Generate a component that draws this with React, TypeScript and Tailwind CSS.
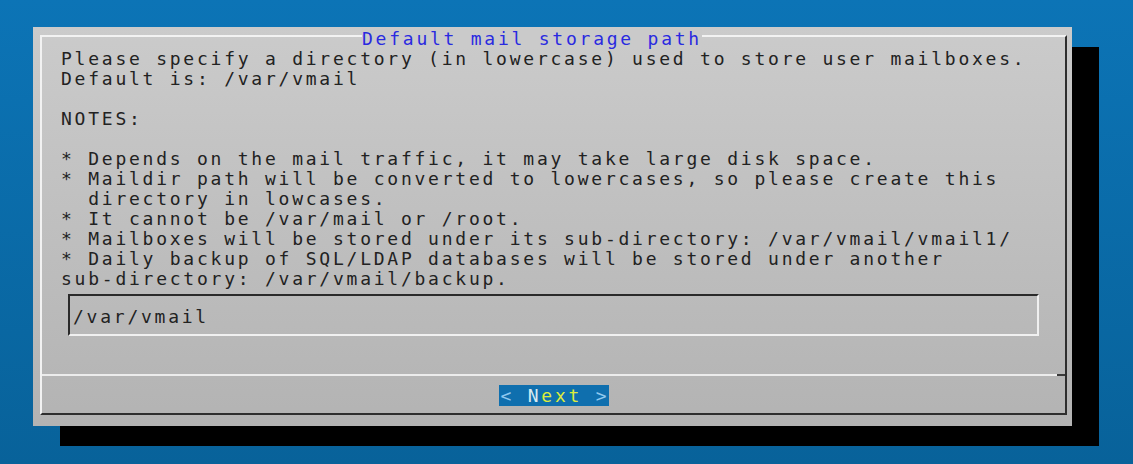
const lines = [
  "Please specify a directory (in lowercase) used to store user mailboxes.",
  "Default is: /var/vmail",
  "",
  "NOTES:",
  "",
  "* Depends on the mail traffic, it may take large disk space.",
  "* Maildir path will be converted to lowercases, so please create this",
  "  directory in lowcases.",
  "* It cannot be /var/mail or /root.",
  "* Mailboxes will be stored under its sub-directory: /var/vmail/vmail1/",
  "* Daily backup of SQL/LDAP databases will be stored under another",
  "sub-directory: /var/vmail/backup.",
];

const App = () => {
  return (
    <div className="w-[1133px] h-[464px] overflow-hidden bg-gradient-to-b from-[#0c74b6] to-[#08629a] pt-[27px] pl-[33px] font-['DejaVu_Sans_Mono','Liberation_Mono',monospace] text-[18px] leading-[20px] tracking-[2.76px]">
      <div className="w-[1039px] h-[399px] bg-gradient-to-b from-[#cbcbcb] to-[#b3b3b3] shadow-[27px_20px_0_#000] pt-[8px] pl-[7px]">
        <div className="relative w-[1027px] h-[380px] flex flex-col border-2 border-t-[#f2f2f2] border-l-[#f2f2f2] border-r-[#2e2e2e] border-b-[#2e2e2e]">
          <span className="absolute left-[320px] top-[-8px] bg-[#cacaca] text-[#2a2ae0] whitespace-pre">
            Default mail storage path
          </span>
          <div className="pl-[19px] pt-[12px] text-[#222]">
            {lines.map((l, i) => (
              <div key={i} className="h-[20px] whitespace-pre">
                {l}
              </div>
            ))}
            <div className="mt-[5px] ml-[7px] w-[971px] h-[42px] border-2 border-t-[#2a2a2a] border-l-[#2a2a2a] border-r-[#f0f0f0] border-b-[#f0f0f0] pl-[3px] pt-[11px]">
              /var/vmail
            </div>
          </div>
          <div className="mt-[38px] flex h-[2px]">
            <div className="flex-1 bg-[#ececec]" />
            <div className="w-[8px] bg-[#3a3a3a]" />
          </div>
          <div className="flex-1 flex justify-center pt-[9px]">
            <div className="w-[110px] h-[21px] bg-[#0f6fae] whitespace-pre leading-[21px] pl-[2px]">
              <span className="text-[#8fc8ee]">&lt; </span>
              <span className="text-[#d6eaf2]">N</span>
              <span className="text-[#dcec3c]">ext</span>
              <span className="text-[#8fc8ee]"> &gt;</span>
            </div>
          </div>
        </div>
      </div>
    </div>
  );
};

export default App;
